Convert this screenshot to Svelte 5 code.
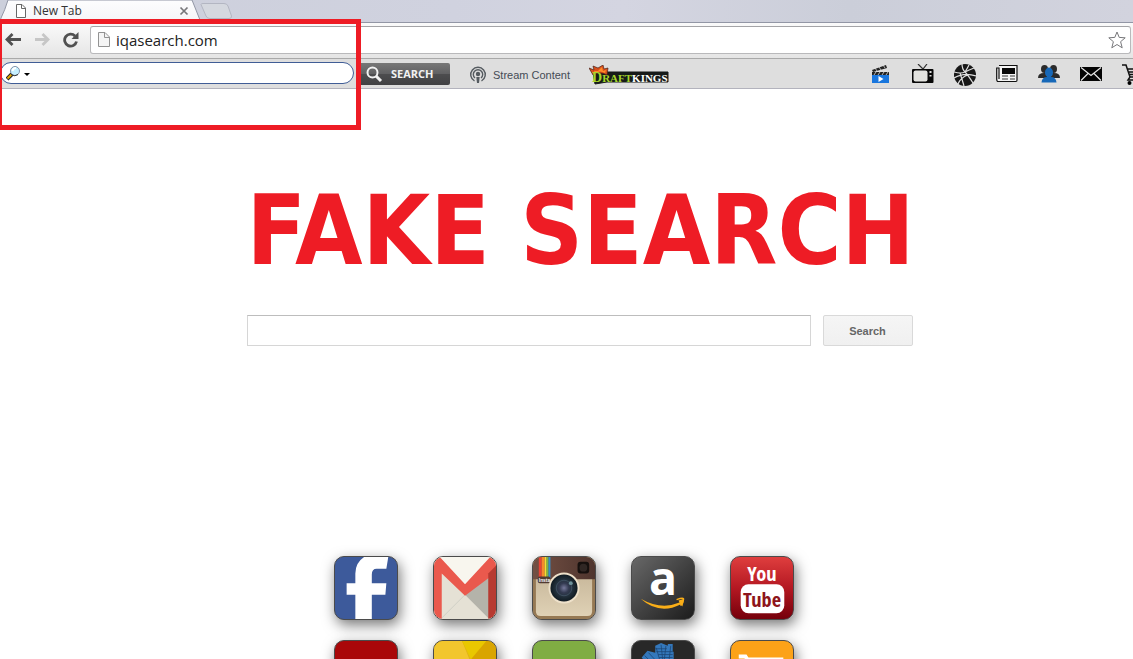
<script>
  let address = $state('iqasearch.com');
  let toolbarQuery = $state('');
  let query = $state('');
</script>

<div class="page">
  <div class="tabs">
    <svg class="tab-shape" viewBox="0 0 236 22" aria-hidden="true">
      <defs>
        <linearGradient id="tabFill" x1="0" y1="0" x2="0" y2="1">
          <stop offset="0" stop-color="#fdfdfe" />
          <stop offset="1" stop-color="#f5f5f7" />
        </linearGradient>
      </defs>
      <path d="M0 22 L1 18 Q5 10 8 0 H192 L200 20 L203 22Z" fill="url(#tabFill)" stroke="#9296a5" />
      <path d="M201 4.500 Q201 3.500 203 3.500 H224 Q227 3.500 228 6 L231.500 16 Q232 18.500 229 18.500 H210 Q207 18.500 206 16Z" fill="#d5d8df" stroke="#b3b6c2" />
    </svg>
    <div class="tab">
      <svg width="12" height="15" viewBox="0 0 12 15" aria-hidden="true"><path d="M1.500 .5H7L10.500 4V13.500H1.500Z" fill="#fff" stroke="#686868" /><path d="M6.500 .5V4.500H10.500" fill="none" stroke="#686868" /></svg>
      <span>New Tab</span>
      <button class="close" aria-label="Close tab"><svg width="10" height="10" viewBox="0 0 10 10"><path d="M1.500 1.500 8.500 8.500M8.500 1.500 1.500 8.500" stroke="#77777a" stroke-width="1.700" /></svg></button>
    </div>
  </div>

  <div class="browser-bar">
    <button aria-label="Back"><svg width="18" height="16" viewBox="0 0 18 16"><path d="M9.500 2 4 7.500l5.500 5.500M4 7.500h14" fill="none" stroke="#515151" stroke-width="2.800" /></svg></button>
    <button aria-label="Forward"><svg width="18" height="16" viewBox="0 0 18 16"><path d="M10.500 2l5.500 5.500-5.500 5.500M16 7.500H3" fill="none" stroke="#c6c6c6" stroke-width="2.800" /></svg></button>
    <button aria-label="Reload"><svg width="18" height="16" viewBox="0 0 18 16"><path d="M14 4A6 6 0 1 0 15.500 9.500" fill="none" stroke="#515151" stroke-width="2.800" /><path d="M17.500 0V7H10.500Z" fill="#515151" /></svg></button>
    <label class="address">
      <svg width="12" height="16" viewBox="0 0 12 16" aria-hidden="true"><path d="M.5 .5H7L11.500 5V14.500H.5Z" fill="#f5f5f5" stroke="#939393" /><path d="M6.500 .5V5.500H11.500" fill="none" stroke="#939393" /></svg>
      <input type="text" aria-label="Address" bind:value={address} />
      <button aria-label="Bookmark this page"><svg width="18" height="18" viewBox="0 0 18 18"><path d="M9 1 11.200 6.400 17.200 6.800 12.600 10.700 14.200 16.800 9 13.500 3.800 16.800 5.400 10.700 .8 6.800 6.800 6.400Z" fill="#fff" stroke="#77777a" stroke-linejoin="round" /></svg></button>
    </label>
  </div>

  <div class="extension-bar">
    <label class="pill">
      <svg width="24" height="16" viewBox="0 0 24 16" aria-hidden="true"><path d="M1 14 6 9" stroke="#222" stroke-width="4" /><path d="M1.500 13.500 5.500 9.500" stroke="#e7a900" stroke-width="2" /><circle cx="9" cy="6" r="4.500" fill="#c5efff" stroke="#8291a8" /><path d="M6.500 6Q7 3 10 3" stroke="#fff" stroke-width="2" fill="none" /><path d="M5 9.500Q9 12 12 9.500" stroke="#333" fill="none" /><path d="M18 8h6l-3 3z" fill="#000" /></svg>
      <input type="text" aria-label="Toolbar search" bind:value={toolbarQuery} />
    </label>
    <button class="dark-search">
      <svg width="17" height="17" viewBox="0 0 17 17" aria-hidden="true"><circle cx="6.500" cy="6.500" r="5" fill="none" stroke="#f2f2f2" stroke-width="2" /><path d="M10 10 15 15" stroke="#f2f2f2" stroke-width="3" /></svg>
      <span>SEARCH</span>
    </button>
    <a class="stream" href="#stream">
      <svg width="18" height="18" viewBox="0 0 18 18" aria-hidden="true"><g fill="none" stroke="#555b60" stroke-width="1.400"><path d="M5.500 15A7.300 7.300 0 1 1 12.500 15" /><path d="M6 12A4.700 4.700 0 1 1 12 12" /></g><circle cx="9" cy="8" r="2.200" fill="#555b60" /><path d="M7.300 11h3.400l-.7 6H8z" fill="#555b60" /></svg>
      <span>Stream Content</span>
    </a>
    <a class="kings" href="#draftkings" aria-label="DraftKings">
      <svg width="80" height="20" viewBox="0 0 80 20">
        <path d="M4 7H18L79 7V17H18L6 19Z" fill="#171b19" stroke="#171b19" stroke-linejoin="round" />
        <path d="M4 10 0 3 5 5 4 1 9 3 14 0 15 4 19 3 18 10Q11 6 4 10Z" fill="#d94f1c" stroke="#4a2318" stroke-width=".7" />
        <path d="M6 8 5 6 9 6 13 2 14 6 17 5 16 8Q11 5 6 8Z" fill="#ff8d29" />
        <text x="3" y="17" font-family="Liberation Serif, serif" font-weight="700" font-size="11" fill="#a5d52a"><tspan font-size="14">D</tspan>RAFT<tspan fill="#fff">KINGS</tspan></text>
      </svg>
    </a>
    <nav class="shortcuts" aria-label="Shortcuts">
      <a href="#movies" aria-label="Movies"><svg viewBox="0 0 22 22"><path d="M2 6 16 1l1 3L3 8z" fill="#222" /><path d="M5 4l2 3M9 3l2 3M13 1l2 3" stroke="#ddd" stroke-width=".8" /><path d="M2 8h17v4H2z" fill="#222" /><path d="M6 8 4 11M10 8l-2 3M14 8l-2 3M18 8l-2 3" stroke="#ddd" stroke-width=".8" /><path d="M2 11h17v8H2z" fill="#1976de" /><path d="M8.500 12v6l5-3z" fill="#fff" /></svg></a>
      <a href="#tv" aria-label="Television"><svg viewBox="0 0 22 22"><path d="M6 0l5 5 4-5" fill="none" stroke="#333" stroke-width="1.200" /><rect x="0" y="5" width="21.500" height="14" rx="1" fill="#080808" /><rect x="1.500" y="6.500" width="14" height="11" rx="2" fill="#e2e2df" /><path d="M17.500 7h2v2h-2zM17.500 11h2v1.500h-2z" fill="#ddd" /></svg></a>
      <a href="#sports" aria-label="Sports"><svg viewBox="0 0 22 22"><circle cx="11" cy="11" r="11" fill="#171717" /><path d="M0 8Q7 10 11 8T20 4M8 0Q8 5 11 8T19 19M0 14Q10 8 22 12M4 20Q7 13 14 11M15 1Q13 5 11 8M10 22Q8 15 6 9" fill="none" stroke="#dfdfdf" stroke-width="1.200" /></svg></a>
      <a href="#news" aria-label="News"><svg viewBox="0 0 22 22"><path d="M3 1.500H21V16Q21 17.500 20 17.500H2Q.7 17.500 .7 15V4H3V15" fill="#f4f4f4" stroke="#111" stroke-width="1.200" /><path d="M6 4H19V10H6z" fill="#080808" /><path d="M6 12h6M6 15h6M14 12h5M14 15h5" stroke="#777" stroke-width="1.600" /></svg></a>
      <a href="#friends" aria-label="Friends"><svg viewBox="0 0 22 22"><g fill="#2b2b2b"><ellipse cx="6.500" cy="5" rx="3.500" ry="4" /><ellipse cx="15.500" cy="5" rx="3.500" ry="4" /><path d="M0 14Q0 9 6 9h10q6 0 6 5z" /></g><g fill="#1768b8"><path d="M3.500 18.500Q4 13 9 13V10h4v3q5 0 5.500 5.500z" /><ellipse cx="11" cy="8.500" rx="4" ry="5" /></g></svg></a>
      <a href="#mail" aria-label="Mail"><svg viewBox="0 0 22 22"><path d="M0 3h22v14H0z" fill="#050505" /><path d="M1 3.500l10 8L21 3.500M1 16.500l7-7M21 16.500l-7-7" fill="none" stroke="#e7e7e7" stroke-width="1.200" /></svg></a>
      <a href="#shop" aria-label="Shopping"><svg viewBox="0 0 22 22"><path d="M0 1h4l4 12h12l2-8H5M7 8h14M7 10.500h14M8 13l-2 3h14" fill="none" stroke="#111" stroke-width="1.500" /><circle cx="7.500" cy="19" r="2" /><circle cx="19" cy="19" r="2" /></svg></a>
    </nav>
  </div>

  <main>
    <div class="hero">
      <h1>FAKE SEARCH</h1>
      <form onsubmit={(event) => event.preventDefault()}>
        <input type="search" aria-label="Search the web" bind:value={query} />
        <button>Search</button>
      </form>
    </div>

    <nav class="tiles" aria-label="Favourite sites">
      <a href="#facebook" aria-label="Facebook" class="facebook"><svg viewBox="0 0 64 64"><path d="M21 64V39h-9V27h9V17Q21 6 30 0H55L53 12H43Q38 12 38 18v9h15l-1 12H38v25z" fill="#fff" /></svg></a>
      <a href="#gmail" aria-label="Gmail" class="gmail"><svg viewBox="0 0 64 64"><path d="M0 0h64v64H0z" fill="#e5e1d5" /><path d="M5 0h54L32 30z" fill="#f8f6ee" /><path d="M32 39 57 15v49z" fill="#b4b3aa" /><path d="M8 63 32 39" stroke="#d0cec4" /><path d="M0 0h6l26 28L58 0h6v16L32 40 8 17v47H0z" fill="#ea594d" /><path d="M56 17 64 9v55h-8z" fill="#b73a31" /></svg></a>
      <a href="#instagram" aria-label="Instagram" class="instagram"><svg viewBox="0 0 64 64"><defs><linearGradient id="sand" x2="0" y2="1"><stop stop-color="#c9b99c" /><stop offset="1" stop-color="#dfd1b5" /></linearGradient><linearGradient id="leather" x2="1" y2="0"><stop stop-color="#735044" /><stop offset="1" stop-color="#4e342d" /></linearGradient><radialGradient id="lens"><stop stop-color="#777a9c" /><stop offset=".35" stop-color="#343b52" /><stop offset=".65" stop-color="#22303b" /><stop offset="1" stop-color="#101b22" /></radialGradient></defs><path d="M0 0h64v64H0z" fill="#967954" /><path d="M3 20h58v36q0 5-5 5H8q-5 0-5-5z" fill="url(#sand)" /><path d="M0 0h64v23H0z" fill="url(#leather)" /><path d="M6 0h3v22H6z" fill="#e84335" /><path d="M9 0h3v22H9z" fill="#f58b2b" /><path d="M12 0h2v22h-2z" fill="#f5dc35" /><path d="M14 0h2v22h-2z" fill="#79b843" /><path d="M16 0h2v22h-2z" fill="#388fc9" /><rect x="5" y="20" width="13" height="7" rx="2" fill="#513b32" /><text x="6" y="26" font-size="5" font-weight="700" fill="#fff">Insta</text><rect x="46" y="5" width="12" height="12" rx="3" fill="#16100e" /><circle cx="52" cy="11" r="4" fill="#302724" /><circle cx="32" cy="32" r="16" fill="#eee1ca" /><circle cx="32" cy="32" r="14" fill="url(#lens)" /><circle cx="32" cy="32" r="8" fill="none" stroke="#3e5060" /><circle cx="39" cy="27" r="2" fill="#6f939c" /></svg></a>
      <a href="#amazon" aria-label="Amazon" class="amazon"><svg viewBox="0 0 64 64"><text x="32" y="39" text-anchor="middle" font-size="48" font-weight="700" fill="#fff" font-family="Open Sans, sans-serif">a</text><path d="M9 43Q30 55 49 47l-1-2 6-2-2 8-2-2Q28 60 9 43z" fill="#f9ae18" /><path d="M46 44q8-3 7 0 0 3-3 6" fill="none" stroke="#f9ae18" stroke-width="1.500" /></svg></a>
      <a href="#youtube" aria-label="YouTube" class="youtube"><svg viewBox="0 0 64 64"><g font-family="Open Sans Condensed, Roboto Condensed, DejaVu Sans Condensed, sans-serif" font-weight="700" text-anchor="middle"><text x="32" y="25" font-size="21" fill="#fff">You</text><rect x="10" y="28" width="45" height="30" rx="8" fill="#fff" /><text x="32" y="52" font-size="21" fill="#8e151b">Tube</text></g></svg></a>
      <a href="#red" aria-label="Red shortcut" class="red"></a>
      <a href="#gold" aria-label="Gold shortcut" class="gold"><svg viewBox="0 0 64 64"><path d="M0 0h29l8 20L0 30z" fill="#f2c62d" /><path d="M29 0h35v30H45z" fill="#d9a500" /><path d="M29 0h25L38 19z" fill="#e9c800" /></svg></a>
      <a href="#green" aria-label="Green shortcut" class="green"></a>
      <a href="#city" aria-label="City shortcut" class="city"><svg viewBox="0 0 64 64"><path d="M10 17 16 10 24 12V5L30 2 37 5V3H42V11H43V19L40 32H22Z" fill="#3478bc" /><path d="M13 15l12 12M17 12l13 14M25 7l4 14M30 4l2 18M35 5l-2 17M40 5l-2 17M24 8h12M25 11h17M27 14h15M28 17h14" stroke="#1d4675" stroke-width=".8" /></svg></a>
      <a href="#shopping" aria-label="Shopping shortcut" class="orange"><svg viewBox="0 0 64 64"><path d="M8 14h8l2 3h36v30H20L14 18H8z" fill="#fff" /></svg></a>
    </nav>
  </main>
  <div class="highlight" aria-hidden="true"></div>
</div>

<style>
  :global(body) { margin: 0; background: #fff; }
  .page { position: relative; height: 100vh; overflow: hidden; font-family: "Liberation Sans", Arial, sans-serif; }
  * { box-sizing: border-box; }
  button { padding: 0; border: 0; background: none; font: inherit; }
  input { min-width: 0; border: 0; outline: 0; background: transparent; }
  a { color: inherit; text-decoration: none; }
  svg { display: block; flex-shrink: 0; }
  .tabs { position: relative; height: 23px; border-bottom: 1px solid #9296a5; background: linear-gradient(90deg, #cccfdb, #d0d2df 40%, #d4d5e1 55%, #cbced9 75%, #d2d3de); }
  .tab-shape { position: absolute; left: 0; top: 0; width: 236px; height: 22px; }
  .tab { position: relative; display: flex; align-items: center; gap: 6px; width: 189px; height: 22px; padding-left: 15px; font: 12px/16px "Open Sans", sans-serif; color: #333; }
  .close { margin-left: auto; }
  .browser-bar { display: flex; align-items: center; gap: 11px; height: 36px; padding: 0 2px 1px 3px; border-bottom: 1px solid #a9a9a9; background: linear-gradient(#fafafa, #e5e5e5); }
  .address { flex: 1; display: flex; align-items: center; gap: 6px; height: 28px; padding: 0 4px 0 7px; border: 1px solid #b9b9bb; border-top-color: #a4a4a7; border-radius: 3px; background: #fff; }
  .address input { flex: 1; padding: 0; font: 15px/20px "Open Sans", sans-serif; color: #222; }
  .extension-bar { display: flex; align-items: center; height: 30px; padding-top: 2px; border-bottom: 1px solid #b3b3bd; background: #dedede; }
  .pill { display: flex; align-self: flex-start; align-items: center; width: 354px; height: 22px; margin-top: 1px; padding: 0 12px 0 5px; border: 1px solid #405d96; border-radius: 12px; background: #fff; }
  .pill input { flex: 1; }
  .dark-search { display: flex; align-self: flex-start; align-items: center; gap: 8px; width: 92px; height: 22px; margin: 2px 0 0 4px; padding-left: 8px; border-radius: 2px; background: linear-gradient(#777, #606062 50%, #4c4c4e 52%, #414143); color: #f2f2f2; font: 700 11px/16px "Open Sans", sans-serif; }
  .stream { display: flex; align-items: center; gap: 6px; margin-left: 19px; color: #444b55; font-size: 11px; }
  .kings { margin-left: 19px; }
  .shortcuts { display: flex; gap: 20px; margin-left: auto; margin-right: -11px; }
  .shortcuts svg { width: 22px; height: 22px; }
  .hero { width: 666px; max-width: 100%; margin: 0 auto; position: relative; left: 13px; padding-top: 82px; }
  h1 { margin: 0; color: #ee1c25; font: 700 97px/120px "DejaVu Sans Condensed", "DejaVu Sans", sans-serif; text-align: center; white-space: nowrap; }
  form { display: flex; gap: 12px; margin-top: 24px; }
  form input { flex: 1; height: 31px; border: 1px solid #d6d6d6; border-top-color: #bdbdbd; }
  form button { width: 90px; height: 31px; border: 1px solid #d9d9d9; border-radius: 2px; background: linear-gradient(#f5f5f5, #f0f0f0); color: #666; font-size: 11px; font-weight: 700; }
  .tiles { display: grid; grid-template-columns: repeat(5, 64px); gap: 20px 35px; justify-content: center; margin-top: 210px; padding-right: 5px; }
  .tiles a { height: 64px; overflow: hidden; border: 1px solid #4b4b4b; border-radius: 10px; box-shadow: 2px 5px 14px #0008; }
  .tiles svg { width: 100%; height: 100%; }
  .facebook { background: #3d5a9b; }
  .gmail { background: #e5e1d5; }
  .instagram { background: #ad926c; }
  .tiles .amazon, .amazon svg { overflow: visible; }
  .amazon { background: linear-gradient(135deg, #686868, #1c1c1c); }
  .youtube { background: linear-gradient(#df3e3e, #b41822 50%, #75000b); }
  .red { background: #a90709; }
  .gold { background: #e1b11a; }
  .green { background: #80ad43; }
  .city { background: #282828; }
  .orange { background: #fca218; }
  .highlight { position: absolute; left: 0; top: 19px; width: 361px; height: 111px; border: 5px solid #ee1c25; border-left-width: 2px; }
</style>
